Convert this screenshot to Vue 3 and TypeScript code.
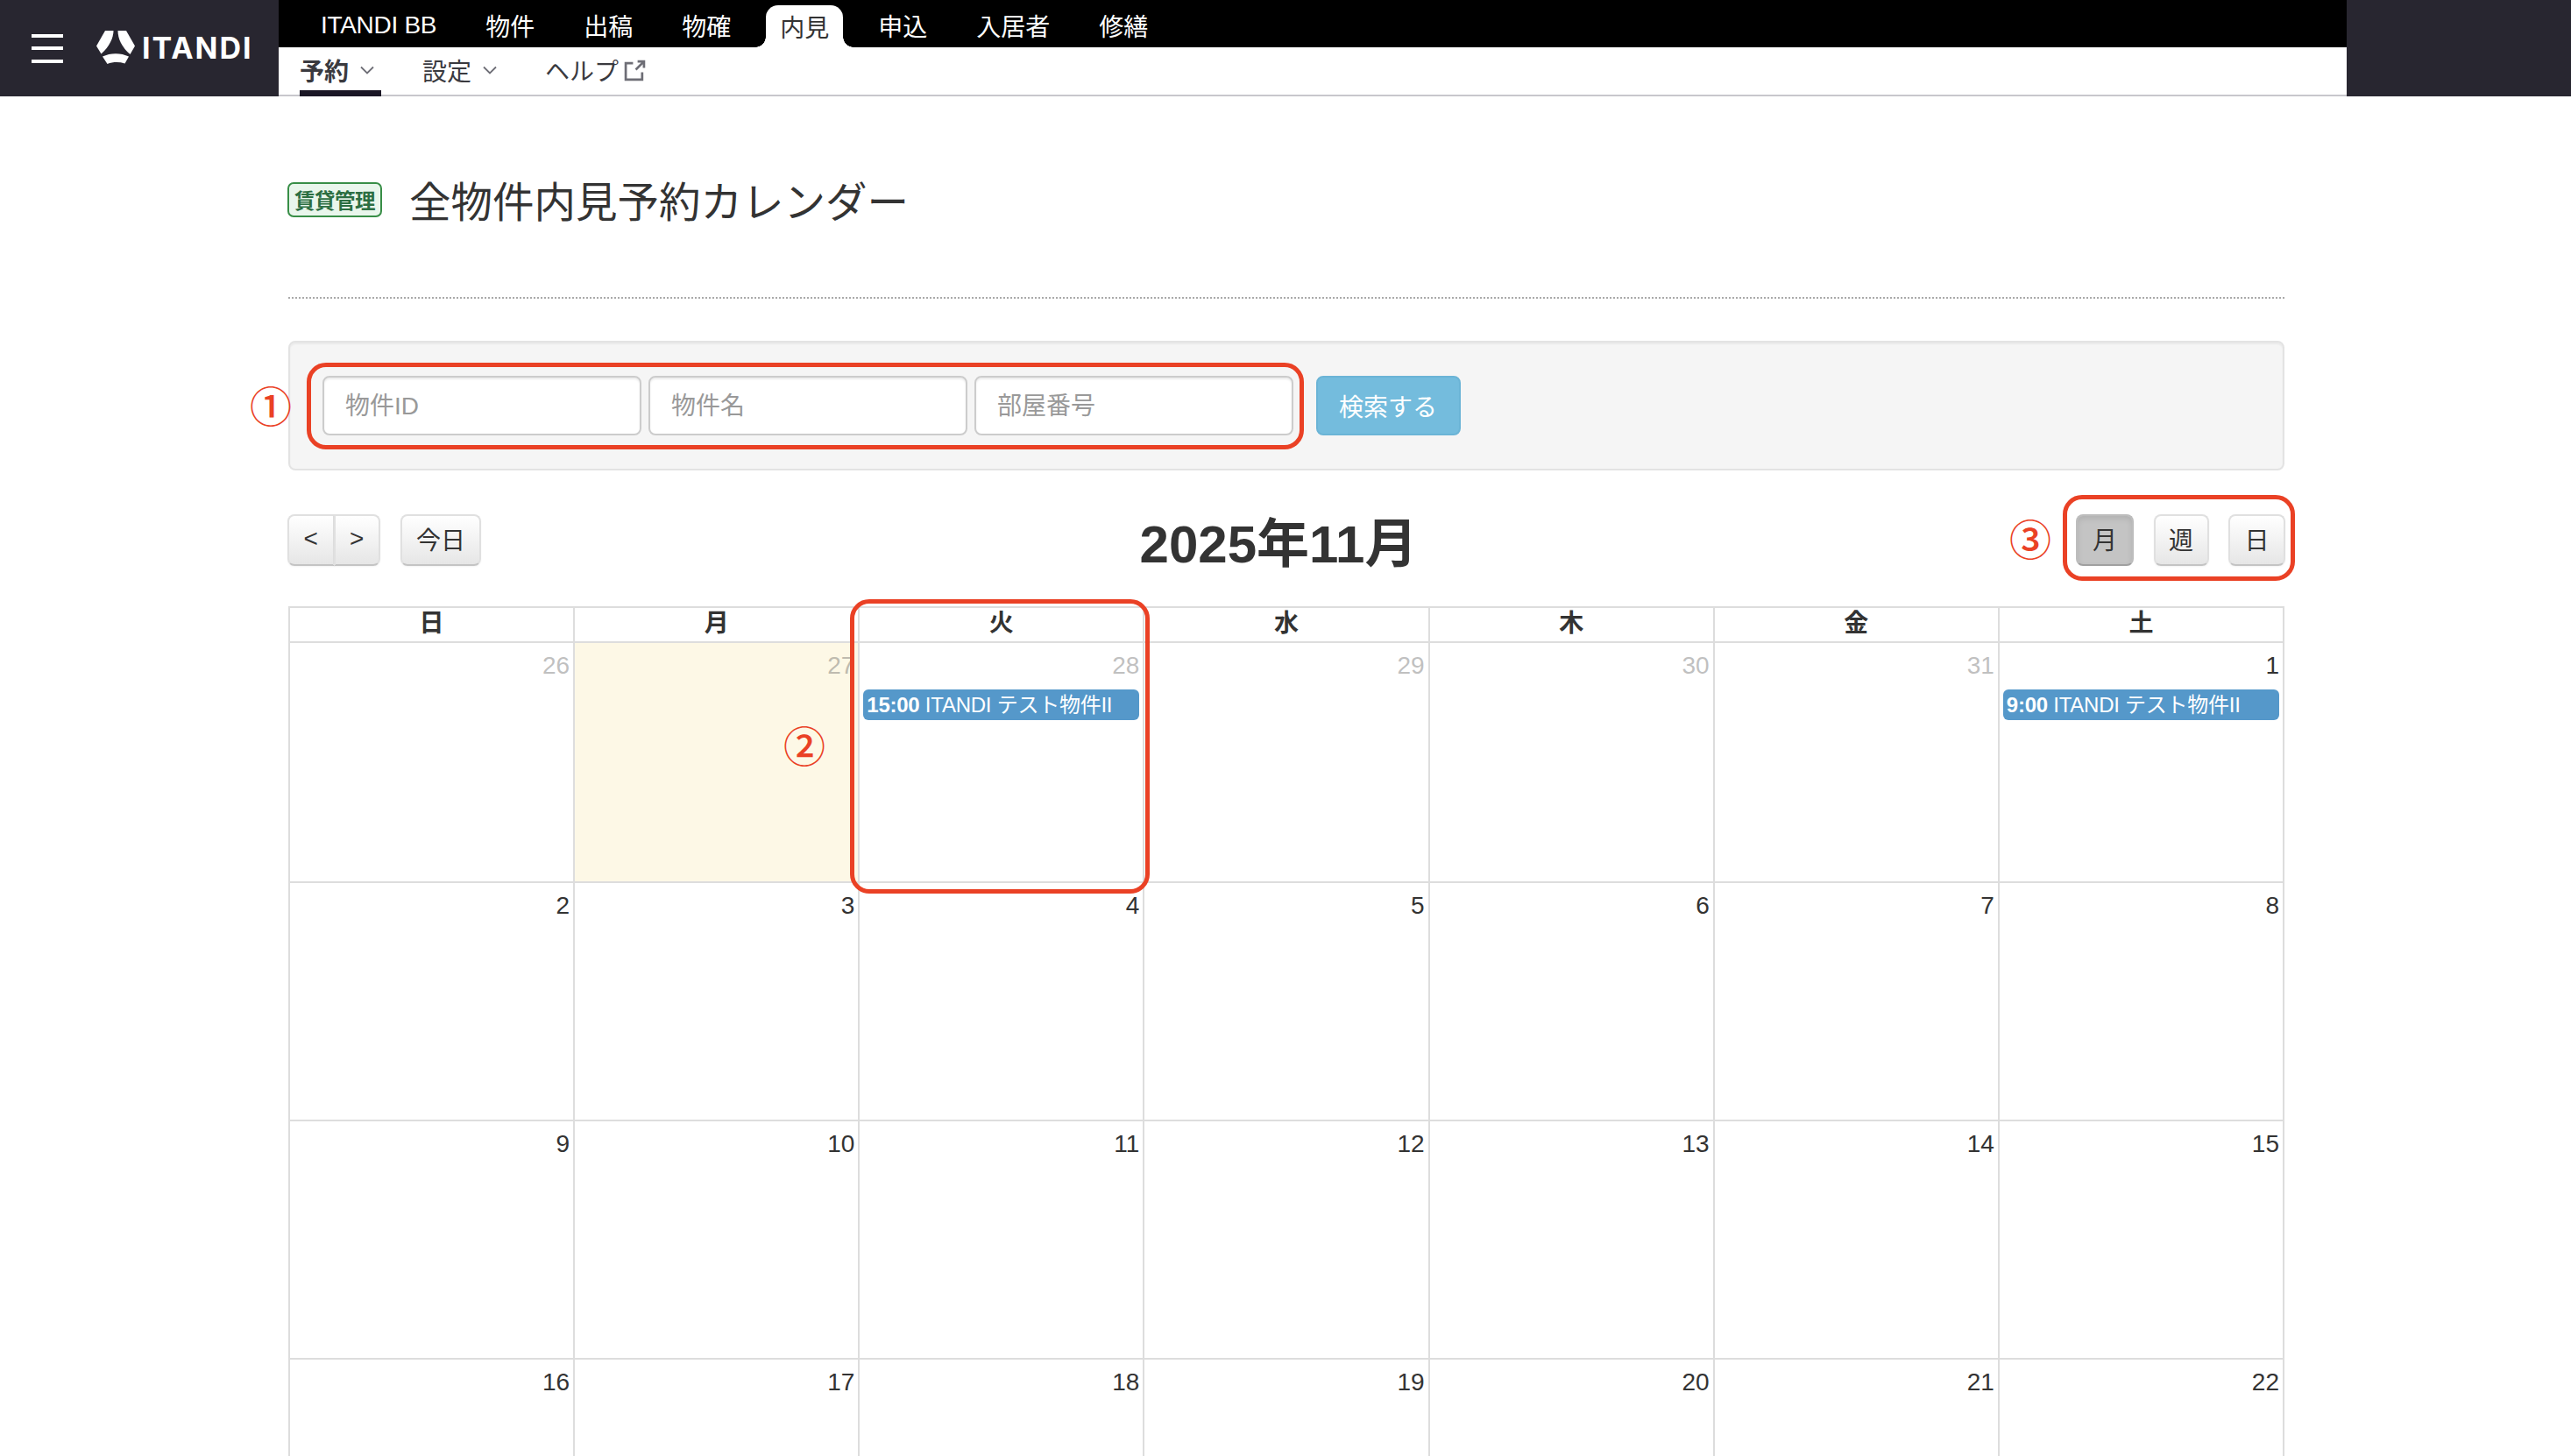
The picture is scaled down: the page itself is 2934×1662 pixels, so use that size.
<script setup lang="ts">
interface CalEvent {
  time: string
  title: string
}

interface CalDay {
  day: number
  muted: boolean
  today: boolean
  event?: CalEvent
}

const mainTabs = ["物件", "出稿", "物確", "内見", "申込", "入居者", "修繕"]
const weekLabels = ["日", "月", "火", "水", "木", "金", "土"]
const viewButtons = ["月", "週", "日"]

const eventTitle = "ITANDI テスト物件II"

// 2025/10/26 から、画面に見える 4 週間分
const weeks: CalDay[][] = []
for (let w = 0; w < 4; w++) {
  const row: CalDay[] = []
  for (let d = 0; d < 7; d++) {
    const date = new Date(2025, 9, 26 + w * 7 + d)
    const day = date.getDate()
    const muted = date.getMonth() !== 10
    const item: CalDay = { day, muted, today: muted && day === 27 }
    if (muted && day === 28) item.event = { time: "15:00", title: eventTitle }
    if (!muted && day === 1) item.event = { time: "9:00", title: eventTitle }
    row.push(item)
  }
  weeks.push(row)
}
</script>

<template>
  <div class="page">
    <header class="topbar">
      <div class="brand">
        <div class="burger"><span></span><span></span><span></span></div>
        <svg class="logo-mark" viewBox="0 0 44 38" fill="#fff">
          <path d="M10 0H19.500C19.500 8 15 18 5.500 26.500L0 17.500Z" />
          <path d="M24.500 0H34L44 17.500L38.500 27C29 19 24.500 9 24.500 0Z" />
          <path d="M7 29.500C16 25 28 25 37 29.500L32.500 37.500C26 35.500 19 35.500 12.500 38Z" />
        </svg>
        <span class="logo-text">ITANDI</span>
      </div>
      <div class="nav">
        <nav class="main-tabs">
          <a class="main-tab brand-tab">ITANDI BB</a>
          <a v-for="tab in mainTabs" :key="tab" class="main-tab" :class="{ active: tab === '内見' }">{{ tab }}</a>
        </nav>
        <nav class="sub-tabs">
          <a class="sub-tab current">予約
            <svg class="chevron" viewBox="0 0 16 10"><path d="M1 1.500L8 8.500L15 1.500" /></svg>
          </a>
          <a class="sub-tab">設定
            <svg class="chevron" viewBox="0 0 16 10"><path d="M1 1.500L8 8.500L15 1.500" /></svg>
          </a>
          <a class="sub-tab">ヘルプ
            <svg class="external" viewBox="0 0 24 24"><path d="M10 4H2V22H20V14M13 11L22 2M15 2H22V9" /></svg>
          </a>
        </nav>
      </div>
      <div class="topbar-end"></div>
    </header>

    <main class="content">
      <div class="title-row">
        <span class="badge">賃貸管理</span>
        <h1 class="title">全物件内見予約カレンダー</h1>
      </div>

      <form class="search-well" @submit.prevent>
        <input class="search-input" placeholder="物件ID" />
        <input class="search-input" placeholder="物件名" />
        <input class="search-input" placeholder="部屋番号" />
        <button class="search-button" type="submit">検索する</button>
      </form>

      <div class="toolbar">
        <div class="toolbar-side left">
          <div class="btn-group">
            <button class="btn nav-btn">&lt;</button>
            <button class="btn nav-btn">&gt;</button>
          </div>
          <button class="btn today-btn">今日</button>
        </div>
        <h2 class="month">2025年11月</h2>
        <div class="toolbar-side views">
          <button v-for="v in viewButtons" :key="v" class="btn view-btn" :class="{ pressed: v === '月' }">{{ v }}</button>
        </div>
      </div>

      <div class="calendar">
        <div class="cal-head">
          <div v-for="w in weekLabels" :key="w" class="head-cell">{{ w }}</div>
        </div>
        <div v-for="(week, i) in weeks" :key="i" class="cal-week">
          <div v-for="cell in week" :key="cell.day" class="day-cell" :class="{ today: cell.today }">
            <div class="day-number" :class="{ muted: cell.muted }">{{ cell.day }}</div>
            <div v-if="cell.event" class="event">
              <b>{{ cell.event.time }}</b> {{ cell.event.title }}
            </div>
          </div>
        </div>
      </div>
    </main>

    <!-- 説明用の注釈 -->
    <div class="frame frame-search"></div>
    <div class="frame frame-day"></div>
    <div class="frame frame-views"></div>
    <span class="note note-1">①</span>
    <span class="note note-2">②</span>
    <span class="note note-3">③</span>
  </div>
</template>

<style>
html,
body {
  margin: 0;
  background: #fff;
  overflow: hidden;
}
</style>

<style scoped>
.page {
  position: relative;
  width: 2934px;
  height: 1662px;
  overflow: hidden;
  font-family: "Liberation Sans", "Noto Sans CJK JP", sans-serif;
  color: #333;
}

.topbar {
  display: flex;
  height: 110px;
}

.brand {
  display: flex;
  align-items: center;
  width: 318px;
  flex: none;
  background-color: #282630;
}

.burger {
  display: flex;
  flex-direction: column;
  gap: 10.500px;
  width: 36px;
  margin-left: 36px;
}

.burger span {
  height: 4px;
  background-color: #fff;
}

.logo-mark {
  width: 44px;
  height: 38px;
  margin-left: 38px;
  margin-top: -2px;
}

.logo-text {
  margin-left: 8px;
  margin-top: -1px;
  font-family: "Inter", sans-serif;
  font-size: 34px;
  font-weight: 700;
  letter-spacing: 2px;
  color: #fff;
}

.nav {
  flex: 1;
  display: flex;
  flex-direction: column;
  min-width: 0;
}

.main-tabs {
  display: flex;
  align-items: flex-end;
  height: 54px;
  padding-left: 32px;
  gap: 24px;
  background-color: #000;
}

.main-tab {
  position: relative;
  display: flex;
  align-items: center;
  justify-content: center;
  height: 48px;
  padding: 0 16px 2px;
  box-sizing: border-box;
  font-size: 28px;
  color: #fff;
}

.brand-tab {
  letter-spacing: -0.300px;
}

.main-tab.active {
  padding-bottom: 0;
  background-color: #fff;
  color: #333;
  border-radius: 14px 14px 0 0;
}

.main-tab.active::before,
.main-tab.active::after {
  content: "";
  position: absolute;
  bottom: 0;
  width: 12px;
  height: 12px;
}

.main-tab.active::before {
  left: -12px;
  background: radial-gradient(circle at 0 0, #000 11.500px, #fff 12px);
}

.main-tab.active::after {
  right: -12px;
  background: radial-gradient(circle at 100% 0, #000 11.500px, #fff 12px);
}

.sub-tabs {
  flex: 1;
  display: flex;
  gap: 47px;
  padding-left: 24px;
  border-bottom: 2px solid #c8c7cc;
  background-color: #fff;
}

.sub-tab {
  position: relative;
  display: flex;
  align-items: center;
  gap: 13px;
  padding: 0 8px 2px 0;
  font-size: 28px;
  color: #3a3a3f;
}

.sub-tab.current {
  font-weight: 700;
}

.sub-tab.current::after {
  content: "";
  position: absolute;
  left: 0;
  right: 0;
  bottom: -2px;
  height: 7px;
  background-color: #1a1625;
}

.chevron {
  width: 16px;
  height: 10px;
  fill: none;
  stroke: #6e6e76;
  stroke-width: 1.800;
}

.external {
  width: 25px;
  height: 25px;
  margin-left: -7px;
  fill: none;
  stroke: #6e6e76;
  stroke-width: 2.600;
}

.topbar-end {
  width: 256px;
  flex: none;
  background-color: #282630;
}

.content {
  width: 2278px;
  margin-left: 329px;
}

.title-row {
  display: flex;
  align-items: center;
  gap: 31px;
  height: 231px;
  padding: 98px 0 91px;
  box-sizing: border-box;
  border-bottom: 2px dotted #aaa;
  margin-bottom: 48px;
}

.badge {
  display: flex;
  align-items: center;
  justify-content: center;
  width: 108px;
  height: 40px;
  margin-left: -1px;
  box-sizing: border-box;
  border: 2px solid #388e47;
  border-radius: 7px;
  background-color: #e9f6ec;
  color: #2c6e42;
  font-size: 23.500px;
  font-weight: 700;
  white-space: nowrap;
  letter-spacing: -0.500px;
}

.title {
  margin: 8px 0 0;
  font-size: 47.500px;
  font-weight: 400;
  line-height: 1;
  white-space: nowrap;
  color: #333;
}

.search-well {
  display: flex;
  align-items: center;
  height: 148px;
  padding-left: 37px;
  box-sizing: border-box;
  border: 2px solid #e3e3e3;
  border-radius: 8px;
  background-color: #f5f5f5;
  box-shadow: inset 0 2px 2px rgba(0, 0, 0, 0.05);
}

.search-input {
  width: 364px;
  height: 68px;
  margin-right: 8px;
  padding: 1px 24px 0;
  box-sizing: border-box;
  border: 2px solid #ccc;
  border-radius: 8px;
  background-color: #fff;
  box-shadow: inset 0 2px 2px rgba(0, 0, 0, 0.075);
  font-family: inherit;
  font-size: 28px;
  outline: none;
}

.search-input::placeholder {
  color: #999;
}

.search-button {
  width: 165px;
  height: 68px;
  margin-left: 17.500px;
  border: 2px solid #6bb4d6;
  border-radius: 8px;
  background-color: #74bcdd;
  color: #fff;
  font-family: inherit;
  font-size: 28px;
  padding: 0;
}

.toolbar {
  display: flex;
  justify-content: space-between;
  align-items: flex-start;
  margin-top: 50px;
  height: 105px;
}

.toolbar-side {
  display: flex;
  gap: 23px;
}

.toolbar-side.left {
  margin-left: -1px;
}

.toolbar-side.views {
  gap: 22.500px;
  margin-right: -1px;
}

.btn-group {
  display: flex;
}

.btn {
  height: 59px;
  box-sizing: border-box;
  border: 2px solid #e0e0e0;
  border-bottom-color: #c4c4c4;
  border-radius: 8px;
  background: linear-gradient(to bottom, #fff, #e6e6e6);
  box-shadow: 0 1px 2px rgba(0, 0, 0, 0.05);
  color: #333;
  font-family: inherit;
  font-size: 28px;
  padding: 0 0 3px;
}

.nav-btn {
  width: 53.500px;
}

.nav-btn:first-child {
  border-radius: 8px 0 0 8px;
}

.nav-btn:last-child {
  margin-left: -1px;
  border-radius: 0 8px 8px 0;
}

.today-btn {
  width: 92px;
}

.view-btn {
  width: 65px;
}

.view-btn:first-child {
  width: 66px;
}

.view-btn:nth-child(2) {
  width: 63px;
}

.view-btn.pressed {
  background: #c4c4c4;
  border-color: #bdbdbd;
  border-bottom-color: #a0a0a0;
  box-shadow: inset 0 3px 6px rgba(0, 0, 0, 0.1);
}

.month {
  margin: 2px 0 0;
  font-size: 60px;
  font-weight: 700;
  line-height: 66px;
  white-space: nowrap;
  color: #333;
}

.calendar {
  border-left: 2px solid #ddd;
}

.cal-head {
  display: grid;
  grid-template-columns: repeat(7, 1fr);
  height: 42px;
  box-sizing: border-box;
  border-top: 2px solid #ddd;
}

.head-cell {
  display: flex;
  align-items: center;
  justify-content: center;
  box-sizing: border-box;
  height: 40px;
  padding-bottom: 2px;
  border-right: 2px solid #ddd;
  border-bottom: 2px solid #ddd;
  font-size: 28px;
  font-weight: 700;
  line-height: 1;
}

.cal-week {
  display: grid;
  grid-template-columns: repeat(7, 1fr);
  height: 272px;
}

.cal-head + .cal-week {
  height: 274px;
}

.day-cell {
  border-right: 2px solid #ddd;
  border-bottom: 2px solid #ddd;
  padding: 10px 4px 0 4px;
  min-width: 0;
}

.day-cell.today {
  background-color: #fdf8e6;
}

.day-number {
  text-align: right;
  font-size: 28px;
  line-height: 32px;
}

.day-number.muted {
  color: #333;
  opacity: 0.3;
}

.event {
  margin-top: 11px;
  height: 35px;
  line-height: 35px;
  padding-left: 4px;
  border-radius: 6px;
  background-color: #5598ca;
  color: #fff;
  font-size: 24px;
  letter-spacing: -0.250px;
  white-space: nowrap;
  overflow: hidden;
}

/* 赤枠と丸数字 */
.frame {
  position: absolute;
  box-sizing: border-box;
  border: 5px solid #ea4125;
  border-radius: 22px;
}

.frame-search {
  left: 350px;
  top: 414px;
  width: 1138px;
  height: 99px;
}

.frame-day {
  left: 970px;
  top: 684px;
  width: 342px;
  height: 336px;
}

.frame-views {
  left: 2354px;
  top: 565px;
  width: 265px;
  height: 98px;
}

.note {
  position: absolute;
  transform: translate(-50%, -50%);
  color: #ea4125;
  font-family: "Noto Sans CJK JP", sans-serif;
  font-size: 48px;
  font-weight: 500;
  line-height: 1;
}

.note-1 {
  left: 309px;
  top: 461px;
}

.note-2 {
  left: 918px;
  top: 849px;
}

.note-3 {
  left: 2317px;
  top: 613px;
}
</style>
